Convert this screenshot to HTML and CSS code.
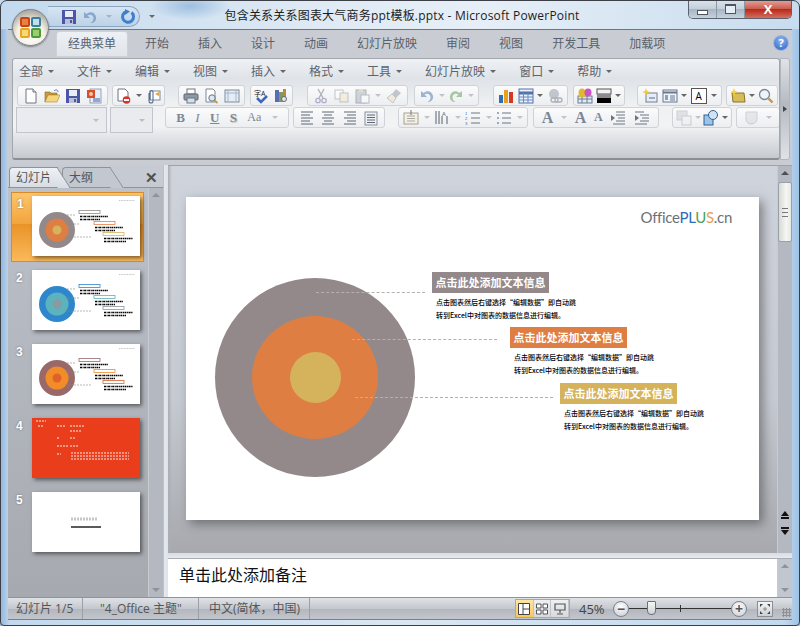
FILE: index.html
```html
<!DOCTYPE html>
<html lang="zh-CN">
<head>
    <meta charset="UTF-8">
    <title>包含关系关系图表大气商务ppt模板.pptx - Microsoft PowerPoint</title>
    <link rel="stylesheet" href="styles.css">
</head>
<body>
<svg class="defs" width="0" height="0">
    <symbol id="i-new" viewBox="0 0 16 16"><path d="M3 1h7l3 3v11H3z" fill="#fff" stroke="#6f7580"/><path d="M10 1v3h3" fill="#dfe4ea" stroke="#6f7580"/></symbol>
    <symbol id="i-open" viewBox="0 0 16 16"><path d="M1 4h5l1 1h6v2H4L1 14z" fill="#c99a3a" stroke="#8d6a1f" stroke-width=".6"/><path d="M4 7h12l-3 7H1z" fill="#f4d67c" stroke="#b0862c" stroke-width=".6"/><path d="M10 3c2-2 4-1 4 1" fill="none" stroke="#4a7ab5"/></symbol>
    <symbol id="i-save" viewBox="0 0 16 16"><rect x="1" y="1" width="14" height="14" fill="#4c56a8"/><rect x="4" y="2" width="8" height="6" fill="#e8ecf5"/><rect x="4" y="10" width="8" height="5" fill="#b9c0d2"/><rect x="9" y="11" width="2" height="3" fill="#4c56a8"/></symbol>
    <symbol id="i-ppt" viewBox="0 0 16 16"><rect x="4" y="1" width="11" height="14" fill="#e8eef7" stroke="#6c7fa0" stroke-width=".7"/><rect x="1" y="2" width="8" height="8" fill="#d94f2b"/><circle cx="5" cy="6" r="2" fill="#f7c8a8"/><path d="M7 11h7M7 13h7" stroke="#3c5fa5"/></symbol>
    <symbol id="i-deldoc" viewBox="0 0 16 16"><path d="M2 1h7l3 3v9H2z" fill="#fff" stroke="#6f7580"/><circle cx="10.500" cy="12" r="3.800" fill="#d5352b"/><rect x="8" y="11" width="5" height="2" fill="#fff"/></symbol>
    <symbol id="i-mail" viewBox="0 0 16 16"><rect x="5" y="3" width="10" height="9" fill="#fff" stroke="#7d8794"/><path d="M10 6l4-2v4z" fill="#d9a441"/><path d="M4 5v8a2 2 0 0 0 4 0V4a1.400 1.400 0 0 0-3 0v8" fill="none" stroke="#58708f" stroke-width="1.100"/></symbol>
    <symbol id="i-print" viewBox="0 0 16 16"><rect x="4" y="1" width="8" height="5" fill="#fff" stroke="#6f7580"/><rect x="1" y="6" width="14" height="6" rx="1" fill="#8f98a6" stroke="#5d6673"/><rect x="4" y="10" width="8" height="5" fill="#cfe3ea" stroke="#6f7580"/></symbol>
    <symbol id="i-preview" viewBox="0 0 16 16"><path d="M2 1h7l2 2v11H2z" fill="#fff" stroke="#7d8794"/><circle cx="8" cy="10" r="3.200" fill="#d9e8f4" stroke="#69727f"/><path d="M10.500 12.500l3 2.500" stroke="#c99a3a" stroke-width="2"/></symbol>
    <symbol id="i-frame" viewBox="0 0 16 16"><rect x="1" y="2" width="14" height="12" fill="#e4ecf6" stroke="#7c8ba0"/><path d="M4 2v12M12 2v12M1 5h14" stroke="#a8b6c8"/></symbol>
    <symbol id="i-research" viewBox="0 0 16 16"><rect x="2" y="2" width="4" height="12" fill="#5a6bb5"/><rect x="6" y="4" width="4" height="10" fill="#7f9a5a"/><rect x="10" y="1" width="3" height="12" fill="#b88a3c"/><circle cx="11" cy="11" r="2.500" fill="#dde9f3" stroke="#666"/></symbol>
    <symbol id="i-cut" viewBox="0 0 16 16"><path d="M5 1l5 9M11 1L6 10" stroke="#6d7480" stroke-width="1.400"/><circle cx="5" cy="12.500" r="2.200" fill="none" stroke="#7b6aa8" stroke-width="1.300"/><circle cx="11" cy="12.500" r="2.200" fill="none" stroke="#7b6aa8" stroke-width="1.300"/></symbol>
    <symbol id="i-copy" viewBox="0 0 16 16"><rect x="1" y="2" width="8" height="9" fill="#fff" stroke="#8c94a0"/><rect x="6" y="5" width="8" height="9" fill="#f4e7c4" stroke="#8c94a0"/></symbol>
    <symbol id="i-paste" viewBox="0 0 16 16"><rect x="2" y="2" width="10" height="13" fill="#a9b2bd" stroke="#69727f"/><rect x="5" y="1" width="4" height="3" fill="#d8c48a"/><rect x="7" y="7" width="8" height="8" fill="#fff" stroke="#7d8794"/></symbol>
    <symbol id="i-brush" viewBox="0 0 16 16"><path d="M10 1l5 4-5 5-4-4z" fill="#8f98a6"/><path d="M6 6l4 4-3 5-6-5z" fill="#ece3c8" stroke="#9a9a90"/></symbol>
    <symbol id="i-undo" viewBox="0 0 16 16"><path d="M2 3v6h6L5.500 6.500C8 5 11 6 11.500 9c.2 2-1 4-3 5 4 0 6-3 5.500-6C13 3 8 2 4.500 5z" fill="#4a73b0"/></symbol>
    <symbol id="i-redo" viewBox="0 0 16 16"><path d="M14 3v6H8l2.500-2.500C8 5 5 6 4.500 9c-.2 2 1 4 3 5-4 0-6-3-5.500-6C3 3 8 2 11.500 5z" fill="#5d9a4e"/></symbol>
    <symbol id="i-repeat" viewBox="0 0 16 16"><path d="M11.500 3.500a5.500 5.500 0 1 1-5-1" fill="none" stroke="#3f7fd0" stroke-width="3"/><path d="M5 0l5 2.500L5 6z" fill="#3f7fd0"/></symbol>
    <symbol id="i-chart" viewBox="0 0 16 16"><rect x="1" y="7" width="4" height="8" fill="#2f6db5"/><rect x="6" y="2" width="4" height="13" fill="#e8a020"/><rect x="11" y="4" width="4" height="11" fill="#d33a22"/></symbol>
    <symbol id="i-table" viewBox="0 0 16 16"><rect x="1" y="1" width="14" height="14" fill="#eaf1fa" stroke="#5272a8"/><path d="M1 5h14" stroke="#5272a8" stroke-width="3"/><path d="M1 9h14M1 12h14M5.500 5v10M10 5v10" stroke="#6d8bc0"/></symbol>
    <symbol id="i-link" viewBox="0 0 16 16"><circle cx="7" cy="6" r="5" fill="#8e96a2"/><rect x="4" y="10" width="7" height="4" rx="2" fill="none" stroke="#6f7680" stroke-width="1.400"/><rect x="8" y="10" width="7" height="4" rx="2" fill="none" stroke="#6f7680" stroke-width="1.400"/></symbol>
    <symbol id="i-shapes" viewBox="0 0 16 16"><rect x="1" y="8" width="14" height="7" fill="#e2ebf5" stroke="#6d7d93"/><path d="M1 11h14M5 8v7M10 8v7" stroke="#6d7d93"/><ellipse cx="5" cy="5" rx="3.500" ry="4.500" fill="#e3b92c"/><ellipse cx="11" cy="4.500" rx="3.500" ry="4" fill="#c856c4"/></symbol>
    <symbol id="i-bw" viewBox="0 0 16 16"><rect x="1" y="1" width="14" height="5" fill="#f2f2f2" stroke="#555"/><rect x="1" y="6" width="14" height="4" fill="#8b8b8b"/><rect x="1" y="10" width="14" height="5" fill="#000"/></symbol>
    <symbol id="i-newbox" viewBox="0 0 16 16"><rect x="4" y="5" width="11" height="9" fill="#e7edf5" stroke="#71808f"/><path d="M7 10h6" stroke="#4a6a9a"/><path d="M4 0l1 3 3 1-3 1-1 3-1-3-3-1 3-1z" fill="#f1c93c"/></symbol>
    <symbol id="i-layout" viewBox="0 0 16 16"><rect x="1" y="2" width="14" height="12" fill="#f0f4f9" stroke="#66778e"/><path d="M1 4.500h14" stroke="#66778e" stroke-width="2"/><rect x="3" y="7" width="3" height="5" fill="#8ba1c0"/><path d="M8 8h5M8 10h5M8 12h5" stroke="#66778e"/></symbol>
    <symbol id="i-starfolder" viewBox="0 0 16 16"><path d="M2 5h12l1 9H3z" fill="#d8bc58" stroke="#8a7428"/><path d="M4 0l1 3 3 1-3 1-1 3-1-3-3-1 3-1z" fill="#f3d23d"/></symbol>
    <symbol id="i-find" viewBox="0 0 16 16"><circle cx="6.500" cy="6.500" r="5" fill="#eef4fa" stroke="#7b8794" stroke-width="1.300"/><path d="M10.500 10.500l4 4" stroke="#c49a36" stroke-width="2.400"/></symbol>
    <symbol id="i-left" viewBox="0 0 16 16"><path d="M2 2h12M2 5h9M2 8h12M2 11h9M2 14h12" stroke="#5f6874"/></symbol>
    <symbol id="i-center" viewBox="0 0 16 16"><path d="M2 2h12M4 5h8M2 8h12M4 11h8M2 14h12" stroke="#5f6874"/></symbol>
    <symbol id="i-right" viewBox="0 0 16 16"><path d="M2 2h12M5 5h9M2 8h12M5 11h9M2 14h12" stroke="#5f6874"/></symbol>
    <symbol id="i-just" viewBox="0 0 16 16"><rect x="2" y="2" width="12" height="13" fill="#eef0f2" stroke="#8a929c"/><path d="M4 5h8M4 7.500h8M4 10h8M4 12.500h8" stroke="#5f6874"/></symbol>
    <symbol id="i-spacing" viewBox="0 0 16 16"><rect x="1" y="3" width="14" height="11" fill="#f4f1e4" stroke="#a6a28e"/><path d="M4 6h8M4 8.500h8M4 11h8" stroke="#a8a8a0"/><path d="M8 0v5" stroke="#6d7480"/></symbol>
    <symbol id="i-bul" viewBox="0 0 16 16"><circle cx="2" cy="3" r="1" fill="#8a92a0"/><circle cx="2" cy="8" r="1" fill="#8a92a0"/><circle cx="2" cy="13" r="1" fill="#8a92a0"/><path d="M6 3h9M6 8h9M6 13h9" stroke="#6d7480"/></symbol>
    <symbol id="i-outdent" viewBox="0 0 16 16"><path d="M6 2h9M6 5h9M8 8h7M6 11h9M3 14h12" stroke="#6d7480"/><path d="M5 8L1 5v6z" fill="#6d7480"/></symbol>
    <symbol id="i-indent" viewBox="0 0 16 16"><path d="M1 2h9M6 5h9M8 8h7M6 11h9M1 14h12" stroke="#6d7480"/><path d="M1 5l4 3-4 3z" fill="#6d7480"/></symbol>
    <symbol id="i-cards" viewBox="0 0 16 16"><rect x="1" y="1" width="10" height="9" fill="#c9ccd2" stroke="#aaa"/><rect x="6" y="6" width="9" height="9" fill="#eef0f3" stroke="#a2a6ac"/></symbol>
    <symbol id="i-3d" viewBox="0 0 16 16"><rect x="1" y="5" width="9" height="10" fill="#9cc4e8" stroke="#34608f"/><circle cx="10" cy="5" r="4.500" fill="#cfe3f5" stroke="#34608f"/></symbol>
    <symbol id="i-blob" viewBox="0 0 16 16"><path d="M2 2h11v7c0 3-3 5-6 5-3 0-5-2-5-5z" fill="#d5d8dd" stroke="#a8acb2"/></symbol>
    <symbol id="thumb-rings" viewBox="0 0 108 60">
        <circle cx="25" cy="34" r="18" class="r1"/><circle cx="25" cy="34" r="11.500" class="r2"/><circle cx="25" cy="34" r="4.500" class="r3"/>
        <path d="M35 19h9M33 28h14M33 41h26" stroke="#888" stroke-width=".6" stroke-dasharray="2 1"/>
        <rect x="47" y="14.500" width="21" height="3" fill="#fff" class="l1"/><rect x="62" y="25.500" width="21" height="3" fill="#fff" class="l2"/><rect x="71" y="36.500" width="21" height="3" fill="#fff" class="l3"/>
        <path d="M48 20.500h28M48 23.500h20M63 31.500h28M63 34.500h20M72 42.500h29M72 45.500h22" stroke="#000" stroke-width="1.500" stroke-dasharray="2 .6 1 .5"/>
        <path d="M87 4.500h16" stroke="#c4c4c4" stroke-dasharray="1 .6"/>
    </symbol>
</svg>

<div class="window">
    <header class="titlebar">
        <div class="orb">
            <span class="orb-logo"><i class="q1"></i><i class="q2"></i><i class="q3"></i><i class="q4"></i></span>
        </div>
        <div class="qat">
            <svg class="ic"><use href="#i-save"/></svg>
            <svg class="ic off"><use href="#i-undo"/></svg><b class="dd off"></b>
            <svg class="ic"><use href="#i-repeat"/></svg>
        </div>
        <b class="dd qat-more"></b>
        <div class="title">包含关系关系图表大气商务ppt模板.pptx - Microsoft PowerPoint</div>
        <div class="win-btns">
            <span class="win-btn"><i class="glyph-min"></i></span>
            <span class="win-btn"><i class="glyph-max"></i></span>
            <span class="win-btn close">X</span>
        </div>
    </header>

    <nav class="tabs">
        <span class="tab active">经典菜单</span>
        <span class="tab">开始</span>
        <span class="tab">插入</span>
        <span class="tab">设计</span>
        <span class="tab">动画</span>
        <span class="tab">幻灯片放映</span>
        <span class="tab">审阅</span>
        <span class="tab">视图</span>
        <span class="tab">开发工具</span>
        <span class="tab">加载项</span>
        <span class="help">?</span>
    </nav>

    <div class="ribbon-wrap">
        <section class="ribbon">
            <div class="menu">
                <span class="menu-item">全部<b class="dd"></b></span>
                <span class="menu-item">文件<b class="dd"></b></span>
                <span class="menu-item">编辑<b class="dd"></b></span>
                <span class="menu-item">视图<b class="dd"></b></span>
                <span class="menu-item">插入<b class="dd"></b></span>
                <span class="menu-item">格式<b class="dd"></b></span>
                <span class="menu-item">工具<b class="dd"></b></span>
                <span class="menu-item">幻灯片放映<b class="dd"></b></span>
                <span class="menu-item">窗口<b class="dd"></b></span>
                <span class="menu-item">帮助<b class="dd"></b></span>
            </div>
            <div class="toolrow row-one">
                <div class="grp w91"><svg class="ic"><use href="#i-new"/></svg><svg class="ic"><use href="#i-open"/></svg><svg class="ic"><use href="#i-save"/></svg><svg class="ic"><use href="#i-ppt"/></svg></div>
                <div class="grp w53 m4"><svg class="ic"><use href="#i-deldoc"/></svg><b class="dd"></b><svg class="ic"><use href="#i-mail"/></svg></div>
                <div class="grp w67 m13"><svg class="ic"><use href="#i-print"/></svg><svg class="ic"><use href="#i-preview"/></svg><svg class="ic"><use href="#i-frame"/></svg></div>
                <div class="grp w43 m5">
                    <svg class="ic" viewBox="0 0 16 16"><text x="0" y="8" class="i-txt">字A</text><path d="M3 10l4 4 6-6" fill="none" stroke="#3d68b5" stroke-width="2.500"/></svg>
                    <svg class="ic"><use href="#i-research"/></svg>
                </div>
                <div class="grp w101 m14"><svg class="ic off"><use href="#i-cut"/></svg><svg class="ic off"><use href="#i-copy"/></svg><svg class="ic off"><use href="#i-paste"/></svg><b class="dd off"></b><svg class="ic off"><use href="#i-brush"/></svg></div>
                <div class="grp w65 m6"><svg class="ic off"><use href="#i-undo"/></svg><b class="dd off"></b><svg class="ic off"><use href="#i-redo"/></svg><b class="dd off"></b></div>
                <div class="grp w75 m14"><svg class="ic"><use href="#i-chart"/></svg><svg class="ic"><use href="#i-table"/></svg><b class="dd"></b><svg class="ic off"><use href="#i-link"/></svg></div>
                <div class="grp w52 m5"><svg class="ic"><use href="#i-shapes"/></svg><svg class="ic"><use href="#i-bw"/></svg><b class="dd"></b></div>
                <div class="grp w85 m12">
                    <svg class="ic"><use href="#i-newbox"/></svg><svg class="ic"><use href="#i-layout"/></svg><b class="dd"></b>
                    <svg class="ic" viewBox="0 0 16 16"><rect x=".5" y=".5" width="15" height="15" fill="#fff" stroke="#555"/><text x="4.500" y="12" class="i-mono">A</text></svg><b class="dd"></b>
                </div>
                <div class="grp w52 m4"><svg class="ic"><use href="#i-starfolder"/></svg><b class="dd"></b><svg class="ic"><use href="#i-find"/></svg></div>
            </div>
            <div class="toolrow row-two">
                <div class="combo w91"><b class="dd off"></b></div>
                <div class="combo w43 m3"><b class="dd off"></b></div>
                <div class="grp w124 m12 fmt"><span class="f-b">B</span><span class="f-i">I</span><span class="f-u">U</span><span class="f-s">S</span><span class="f-a">Aa</span><b class="dd off"></b></div>
                <div class="grp w92 m4"><svg class="ic"><use href="#i-left"/></svg><svg class="ic"><use href="#i-center"/></svg><svg class="ic"><use href="#i-right"/></svg><svg class="ic"><use href="#i-just"/></svg></div>
                <div class="grp w130 m13">
                    <svg class="ic"><use href="#i-spacing"/></svg><b class="dd off"></b>
                    <svg class="ic" viewBox="0 0 16 16"><path d="M2 1v13M5 1v13M8 6v8M13 6v8" stroke="#59616c"/><text x="8" y="6" class="i-mini">A</text></svg><b class="dd off"></b>
                    <svg class="ic" viewBox="0 0 16 16"><text x="0" y="5" class="i-digit">1</text><text x="0" y="10" class="i-digit">2</text><text x="0" y="15" class="i-digit">3</text><path d="M6 3h9M6 8h9M6 13h9" stroke="#6d7480"/></svg><b class="dd off"></b>
                    <svg class="ic"><use href="#i-bul"/></svg><b class="dd off"></b>
                </div>
                <div class="grp w126 m5 fmt"><span class="a-big">A</span><b class="dd off"></b><span class="a-big">A</span><span class="a-small">A</span><svg class="ic"><use href="#i-outdent"/></svg><svg class="ic"><use href="#i-indent"/></svg></div>
                <div class="grp w60 m13"><svg class="ic off"><use href="#i-cards"/></svg><b class="dd off"></b><svg class="ic"><use href="#i-3d"/></svg><b class="dd"></b></div>
                <div class="grp w44 m4"><svg class="ic off"><use href="#i-blob"/></svg><b class="dd off"></b></div>
            </div>
        </section>
        <div class="ribbon-more"><b class="more-arrow"></b></div>
    </div>

    <main class="workspace">
        <aside class="panel">
            <div class="panel-tabs">
                <span class="ptab ptab-on">幻灯片</span>
                <span class="ptab ptab-off">大纲</span>
                <span class="panel-close">✕</span>
            </div>
            <div class="thumbs-wrap">
                <ol class="thumbs">
                    <li class="thumb-row selected"><span class="num">1</span><svg class="thumb t-grey"><use href="#thumb-rings"/></svg></li>
                    <li class="thumb-row"><span class="num">2</span><svg class="thumb t-blue"><use href="#thumb-rings"/></svg></li>
                    <li class="thumb-row"><span class="num">3</span><svg class="thumb t-brown"><use href="#thumb-rings"/></svg></li>
                    <li class="thumb-row"><span class="num">4</span>
                        <svg class="thumb t-red" viewBox="0 0 108 60">
                            <rect width="108" height="60" fill="#ea3d1b"/>
                            <path d="M4 3h10M6 8h6M25 8h8M38 8h14M38 13h12M25 20h3M38 20h6M25 28h12M38 28h8M25 36h4M39 35h58M39 38h58M39 41h58" stroke="#fff" stroke-width=".9" stroke-dasharray="2 1"/>
                        </svg>
                    </li>
                    <li class="thumb-row"><span class="num">5</span>
                        <svg class="thumb" viewBox="0 0 108 60">
                            <rect width="108" height="60" fill="#fff"/>
                            <path d="M39 27h26" stroke="#c6c6c6" stroke-width="3" stroke-dasharray="2 1"/>
                            <path d="M39 35h30" stroke="#000" stroke-width="1.300"/>
                        </svg>
                    </li>
                </ol>
                <div class="vscroll thin"><b class="up"></b><b class="down"></b></div>
            </div>
        </aside>
        <div class="splitter"></div>
        <div class="center">
            <div class="stage">
                <div class="slide-area">
                    <article class="slide">
                        <div class="logo">Office<span class="c-b">PL</span><span class="c-g">U</span><span class="c-o">S</span>.cn</div>
                        <div class="ring r-outer"></div>
                        <div class="ring r-mid"></div>
                        <div class="ring r-inner"></div>
                        <div class="lead l-1"></div>
                        <div class="lead l-2"></div>
                        <div class="lead l-3"></div>
                        <div class="note n-1"><h3 class="note-head">点击此处添加文本信息</h3><p>点击图表然后右键选择“编辑数据”即自动跳</p><p>转到Excel中对图表的数据信息进行编辑。</p></div>
                        <div class="note n-2"><h3 class="note-head">点击此处添加文本信息</h3><p>点击图表然后右键选择“编辑数据”即自动跳</p><p>转到Excel中对图表的数据信息进行编辑。</p></div>
                        <div class="note n-3"><h3 class="note-head">点击此处添加文本信息</h3><p>点击图表然后右键选择“编辑数据”即自动跳</p><p>转到Excel中对图表的数据信息进行编辑。</p></div>
                    </article>
                </div>
                <div class="vscroll main-scroll">
                    <b class="up"></b>
                    <span class="scroll-thumb"></span>
                    <span class="pager"><i class="tri-up"></i><i class="bar"></i></span>
                    <span class="pager"><i class="bar"></i><i class="tri-down"></i></span>
                </div>
            </div>
            <div class="notes-split"></div>
            <div class="notes-row">
                <div class="notes">单击此处添加备注</div>
                <div class="vscroll notes-scroll"><b class="up"></b><b class="down"></b></div>
            </div>
        </div>
    </main>

    <footer class="status">
        <span class="st st-1">幻灯片 1/5</span>
        <span class="st st-2">"4_Office 主题"</span>
        <span class="st st-3">中文(简体，中国)</span>
        <div class="views">
            <span class="view on"><svg class="ic-s" viewBox="0 0 12 12"><path d="M.5.5h11v11H.5zM5 .5v11M5 6h6.500" fill="#fff" stroke="#444"/></svg></span>
            <span class="view"><svg class="ic-s" viewBox="0 0 12 12"><path d="M.5 1h4.500v4H.5zM7 1h4.500v4H7zM.5 7h4.500v4H.5zM7 7h4.500v4H7z" fill="#fff" stroke="#555"/></svg></span>
            <span class="view"><svg class="ic-s" viewBox="0 0 12 12"><path d="M1 1h10v6H1zM6 7v3M3 11h6" fill="none" stroke="#555" stroke-width="1.200"/></svg></span>
        </div>
        <span class="zoom-pct">45%</span>
        <span class="zbtn">−</span>
        <div class="zslider"><i class="ztick"></i><i class="zthumb"></i></div>
        <span class="zbtn">+</span>
        <span class="zfit"><svg class="ic-s" viewBox="0 0 12 12"><path d="M1 1l3 0-3 3zM11 1l-3 0 3 3zM1 11l3 0-3-3zM11 11l-3 0 3-3z" fill="#444"/><path d="M6 4v4M4 6h4" stroke="#888"/></svg></span>
        <span class="grip"></span>
    </footer>
</div>
</body>
</html>
```

FILE: styles.css
```css
* {
    box-sizing: border-box;
}
html, body {
    margin: 0;
    padding: 0;
}
body {
    width: 800px;
    height: 626px;
    overflow: hidden;
    font-family: "Open Sans", "Noto Sans CJK SC", sans-serif;
    font-size: 12px;
    color: #444;
}
.defs {
    position: absolute;
}
.i-txt {
    font-size: 7px;
    fill: #222;
}
.i-mono {
    font-size: 10px;
    fill: #000;
}
.i-mini {
    font-size: 6px;
    fill: #5a6270;
}
.i-digit {
    font-family: "Liberation Sans", sans-serif;
    font-size: 4.200px;
    fill: #3f6fb0;
}

/* window frame */
.window {
    position: relative;
    width: 800px;
    height: 626px;
    padding: 0 8px 6px;
    display: flex;
    flex-direction: column;
    background: linear-gradient(90deg, #8fb6dd 0, #c3d9ee 10px, #d9e7f3 50%, #c3d9ee 98%, #9cc2e6 100%);
    overflow: hidden;
}
.window::after {
    content: "";
    position: absolute;
    inset: 0;
    border: 1px solid #3c4046;
    border-radius: 7px 7px 4px 4px;
    pointer-events: none;
    z-index: 5;
}
.titlebar {
    height: 29px;
    flex: none;
    margin: 0 -8px;
    position: relative;
    display: flex;
    align-items: flex-start;
    background:
        radial-gradient(ellipse 40px 14px at 190px 6px, #9dbfe0, transparent),
        linear-gradient(90deg, #c3d9ee 0, #dfeaf4 40%, #e6eff7 60%, #c8dcef 100%);
}
.orb {
    position: absolute;
    left: 12px;
    top: 9px;
    width: 37px;
    height: 37px;
    border-radius: 50%;
    z-index: 3;
    display: flex;
    align-items: center;
    justify-content: center;
    border: 1px solid #7d8088;
    background: radial-gradient(circle at 50% 70%, #fff 0, #f4f0e4 45%, #b9b6ae 72%, #8f8f8e 100%);
    box-shadow: 0 1px 2px rgba(0, 0, 0, .4);
}
.orb-logo {
    display: grid;
    grid-template-columns: 10px 10px;
    grid-template-rows: 10px 10px;
    gap: 1px;
}
.orb-logo i {
    border: 2px solid;
    border-radius: 2px;
}
.q1 { border-color: #c8431c !important; background: #e9833a; }
.q2 { border-color: #3a7f9e !important; background: #bfe0e8; }
.q3 { border-color: #e5a620 !important; background: #f7d878; }
.q4 { border-color: #4e9a3a !important; background: #9ccc70; }

.qat {
    position: absolute;
    left: 48px;
    top: 6px;
    width: 92px;
    height: 21px;
    padding-left: 13px;
    display: flex;
    align-items: center;
    gap: 5px;
    border: 1px solid #8da6bf;
    border-left: 0;
    border-radius: 0 11px 11px 0;
    background: linear-gradient(#d7e5f2, #bcd2e6);
}
.qat .dd {
    margin: 0 3px;
}
.qat-more {
    position: absolute;
    left: 149px;
    top: 15px;
}
.title {
    flex: 1;
    padding-top: 6px;
    padding-left: 4px;
    text-align: center;
    letter-spacing: .2px;
    color: #1c1c1c;
    white-space: nowrap;
}
.win-btns {
    position: absolute;
    right: 8px;
    top: 0;
    display: flex;
    height: 19px;
    border: 1px solid #59626e;
    border-top: 0;
    border-radius: 0 0 5px 5px;
    overflow: hidden;
}
.win-btn {
    width: 28px;
    display: flex;
    align-items: center;
    justify-content: center;
    border-right: 1px solid #8a97a6;
    background: linear-gradient(#dbe4ec, #c3ced9 50%, #a7b5c4 52%, #c5d3e0);
}
.win-btn.close {
    width: 46px;
    border: 0;
    color: #fff;
    font-weight: 700;
    font-size: 13px;
    background: linear-gradient(#e4a59c, #cc5a4b 50%, #b8281a 52%, #d46f5d);
}
.glyph-min {
    width: 11px;
    height: 5px;
    margin-top: 6px;
    border: 1px solid #4c5560;
    background: #fff;
}
.glyph-max {
    width: 11px;
    height: 10px;
    border: 1px solid #4c5560;
    border-top-width: 2px;
    background: #e6edf3;
}

/* ribbon tabs */
.tabs {
    height: 28px;
    flex: none;
    display: flex;
    align-items: flex-end;
    gap: 29px;
    padding: 0 0 1px 60px;
    position: relative;
    border-top: 1px solid #70757c;
    color: #59616c;
    background: #c9cdd3;
}
.tab {
    height: 24px;
    line-height: 24px;
    white-space: nowrap;
}
.tab.active {
    margin: 0 -11px;
    padding: 0 11px;
    border-radius: 3px 3px 0 0;
    background: linear-gradient(#eef1f4, #e0e5ea);
    box-shadow: 0 0 1px #fff;
}
.help {
    position: absolute;
    right: 4px;
    top: 6px;
    width: 14px;
    height: 14px;
    border-radius: 50%;
    text-align: center;
    line-height: 14px;
    font-size: 11px;
    font-weight: 700;
    color: #fff;
    background: radial-gradient(circle at 50% 30%, #8fb6f0, #2a5fc4);
    box-shadow: 0 0 0 1px #9db6d8;
}

/* ribbon */
.ribbon-wrap {
    height: 108px;
    flex: none;
    display: flex;
    padding: 1px 2px 5px 4px;
    background: #c9cdd3;
}
.ribbon {
    width: 768px;
    overflow: hidden;
    border: 1px solid #a2a7ae;
    border-bottom: 2px solid #8a8f96;
    border-radius: 3px;
    padding-left: 4px;
    background: linear-gradient(#eff1f4 0, #dfe3e8 20%, #eef0f2 45%, #f2f3f5 68%, #e6e8eb 76%, #c6cad0 100%);
}
.ribbon-more {
    flex: 1;
    display: flex;
    align-items: center;
    justify-content: center;
    border: 1px solid #b0b5bc;
    border-radius: 0 3px 3px 0;
    background: linear-gradient(#dfe3e7, #b5bac2 45%, #dfe3e7);
}
.more-arrow {
    border-left: 4px solid #444;
    border-top: 3px solid transparent;
    border-bottom: 3px solid transparent;
}
.menu {
    height: 26px;
    display: flex;
    align-items: center;
    padding: 0 0 2px 2px;
    color: #5c646e;
}
.menu-item {
    display: flex;
    align-items: center;
    gap: 5px;
    margin-right: 23px;
    white-space: nowrap;
}
.dd {
    display: inline-block;
    flex: none;
    width: 0;
    height: 0;
    border-top: 3px solid #666;
    border-left: 3px solid transparent;
    border-right: 3px solid transparent;
}
.dd.off {
    opacity: .35;
}
.toolrow {
    display: flex;
    align-items: flex-start;
    white-space: nowrap;
}
.row-one {
    height: 22px;
}
.row-two {
    margin-left: -1px;
    height: 26px;
}
.grp {
    height: 21px;
    flex: none;
    display: flex;
    align-items: center;
    justify-content: space-evenly;
    border: 1px solid #cfd3d8;
    border-radius: 3px;
    background: linear-gradient(#fbfbfc, #eceef1);
}
.combo {
    height: 26px;
    flex: none;
    display: flex;
    align-items: center;
    justify-content: flex-end;
    padding-right: 7px;
    border: 1px solid #c2c6cc;
    background: #e9ebee;
}
.ic {
    width: 16px;
    height: 16px;
    flex: none;
}
.ic.off {
    opacity: .5;
}
.w43 { width: 43px; }
.w44 { width: 44px; }
.w52 { width: 52px; }
.w53 { width: 53px; }
.w60 { width: 60px; }
.w65 { width: 65px; }
.w67 { width: 67px; }
.w75 { width: 75px; }
.w85 { width: 85px; }
.w91 { width: 91px; }
.w92 { width: 92px; }
.w101 { width: 101px; }
.w124 { width: 124px; }
.w126 { width: 126px; }
.w130 { width: 130px; }
.m3 { margin-left: 3px; }
.m4 { margin-left: 4px; }
.m5 { margin-left: 5px; }
.m6 { margin-left: 6px; }
.m12 { margin-left: 12px; }
.m13 { margin-left: 13px; }
.m14 { margin-left: 14px; }
.fmt {
    font-family: "Liberation Serif", serif;
    color: #7d8694;
}
.f-b { font-weight: 700; font-size: 13px; }
.f-i { font-style: italic; font-size: 13px; }
.f-u { text-decoration: underline; font-weight: 700; font-size: 13px; }
.f-s { font-weight: 700; font-size: 13px; text-shadow: 1px 1px 1px #bbb; }
.f-a { font-size: 12px; }
.a-big { font-size: 16px; font-weight: 700; }
.a-small { font-size: 12px; font-weight: 700; }

/* workspace */
.workspace {
    flex: 1;
    min-height: 0;
    display: flex;
    background: #c9cdd3;
}
.panel {
    width: 155px;
    flex: none;
    display: flex;
    flex-direction: column;
    background: #c6cad2;
}
.panel-tabs {
    height: 22px;
    flex: none;
    margin-top: 1px;
    display: flex;
    align-items: flex-end;
    position: relative;
    color: #555;
    border-bottom: 1px solid #8e939b;
}
.ptab {
    height: 20px;
    line-height: 19px;
    padding: 0 6px;
    position: relative;
    border: 1px solid #8e939b;
    border-right: 0;
    border-bottom: 0;
    border-radius: 4px 0 0 0;
    background: #c3c8d0;
    margin-right: 4px;
}
.ptab::after {
    content: "";
    position: absolute;
    top: -1px;
    right: -6px;
    width: 12px;
    height: 20px;
    border-right: 1px solid #8e939b;
    border-top: 1px solid #8e939b;
    background: inherit;
    transform: skewX(33deg);
}
.ptab-off {
    padding-right: 18px;
}
.ptab-on {
    z-index: 2;
    margin-left: 1px;
    background: linear-gradient(#eef1f5, #d8dde4);
}
.panel-close {
    position: absolute;
    right: 5px;
    top: 1px;
    font-size: 15px;
    font-weight: 700;
    color: #4d5157;
}
.thumbs-wrap {
    flex: 1;
    min-height: 0;
    display: flex;
    background: linear-gradient(#bcc1ca, #a6a9af);
}
.thumbs {
    flex: 1;
    margin: 0;
    padding: 4px 4px 0 3px;
    list-style: none;
}
.thumb-row {
    height: 70px;
    margin-bottom: 4px;
    padding: 3px 0 0 21px;
    position: relative;
}
.thumb-row.selected {
    padding: 3px 0 0 20px;
    margin-bottom: 5px;
    border: 1px solid #d98a2b;
    background: linear-gradient(#fcc56b, #f3a53d 45%, #e99328 46%, #fbb95a);
}
.num {
    position: absolute;
    left: 5px;
    top: 4px;
    color: #fff;
    font-weight: 700;
    font-family: "Liberation Sans", sans-serif;
    text-shadow: 0 0 2px #666;
}
.thumb {
    display: block;
    width: 108px;
    height: 60px;
    background: #fff;
    box-shadow: 2px 2px 4px rgba(0, 0, 0, .5);
}
.t-grey { --a: #93898a; --b: #de7e42; --c: #d4b35c; }
.t-blue { --a: #2e86cc; --b: #5cb2bd; --c: #8a9aa0; }
.t-brown { --a: #99696a; --b: #f28c28; --c: #e0622a; }
.r1 { fill: var(--a); }
.r2 { fill: var(--b); }
.r3 { fill: var(--c); }
.l1 { stroke: var(--a); stroke-width: .8; }
.l2 { stroke: var(--b); stroke-width: .8; }
.l3 { stroke: var(--c); stroke-width: .8; }
.vscroll {
    width: 15px;
    flex: none;
    position: relative;
    display: flex;
    flex-direction: column;
    align-items: center;
    border-left: 1px solid #c7cbd2;
    background: #b4b8c0;
}
.up, .down {
    position: absolute;
    width: 0;
    height: 0;
    border-left: 4px solid transparent;
    border-right: 4px solid transparent;
}
.up {
    top: 5px;
    border-bottom: 4px solid #8e939b;
}
.down {
    bottom: 5px;
    border-top: 4px solid #8e939b;
}
.splitter {
    width: 5px;
    flex: none;
    background: linear-gradient(90deg, #a8acb4 0, #e4e7ec 30%, #dfe3e8 100%);
}
.center {
    flex: 1;
    min-width: 0;
    display: flex;
    flex-direction: column;
}
.stage {
    height: 388px;
    flex: none;
    display: flex;
    border-top: 1px solid #9ea3aa;
}
.slide-area {
    flex: 1;
    padding: 31px 0 0 18px;
    background:
        linear-gradient(90deg, #a9adb6, transparent 4px),
        linear-gradient(#cfd3dc, #c6cad2 60%, #a7a9ae);
}

/* slide */
.slide {
    width: 573px;
    height: 323px;
    position: relative;
    background: #fff;
    box-shadow: 4px 4px 10px rgba(60, 60, 60, .55);
    overflow: hidden;
}
.logo {
    position: absolute;
    right: 27px;
    top: 11px;
    font-family: "Lato", sans-serif;
    font-size: 15px;
    letter-spacing: -.3px;
    color: #6c7178;
}
.c-b { color: #2d69b5; }
.c-g { color: #4e9f5a; }
.c-o { color: #e5a25c; }
.ring {
    position: absolute;
    border-radius: 50%;
}
.r-outer { left: 29px; top: 81px; width: 200px; height: 199px; background: #93898a; }
.r-mid { left: 66px; top: 119px; width: 126px; height: 123px; background: #de7e42; }
.r-inner { left: 104px; top: 155px; width: 51px; height: 51px; background: #d4b35c; }
.lead {
    position: absolute;
    height: 1px;
    border-top: 1px dashed #b4b0ae;
}
.l-1 { left: 130px; top: 95px; width: 109px; }
.l-2 { left: 166px; top: 142px; width: 145px; }
.l-3 { left: 169px; top: 200px; width: 198px; }
.note {
    position: absolute;
    width: 160px;
    font-family: "Noto Sans CJK SC", sans-serif;
    color: #000;
}
.note p {
    margin: 0 0 0 4px;
    height: 12.500px;
    font-size: 7px;
    font-weight: 500;
    line-height: 12.500px;
    white-space: nowrap;
}
.note-head {
    width: 117px;
    height: 21px;
    margin: 0 0 3px;
    font-size: 11px;
    line-height: 21px;
    font-weight: 700;
    text-align: center;
    color: #fff;
}
.n-1 { left: 246px; top: 75px; }
.n-2 { left: 324px; top: 130px; }
.n-3 { left: 374px; top: 186px; }
.n-1 .note-head { background: #93898a; }
.n-2 .note-head { background: #de7e42; }
.n-3 .note-head { background: #d4b35c; }

/* right scrollbar */
.main-scroll {
    padding-top: 16px;
}
.main-scroll .up {
    border-bottom-color: #4c4f55;
}
.scroll-thumb {
    width: 14px;
    height: 60px;
    flex: none;
    position: relative;
    border: 1px solid #9aa0a8;
    border-radius: 2px;
    background: linear-gradient(90deg, #d6d9d6, #f6f6f2 60%, #e6e8e6);
}
.scroll-thumb::after {
    content: "";
    position: absolute;
    left: 3px;
    top: 25px;
    width: 6px;
    height: 7px;
    border-top: 1px solid #777;
    border-bottom: 1px solid #777;
    background: linear-gradient(#777, #777) center / 100% 1px no-repeat;
}
.pager {
    display: flex;
    flex-direction: column;
    align-items: center;
    gap: 1px;
    margin-bottom: 8px;
}
.scroll-thumb + .pager {
    margin-top: auto;
}
.pager + .pager {
    margin-bottom: 18px;
}
.tri-up, .tri-down {
    width: 0;
    height: 0;
    border-left: 4px solid transparent;
    border-right: 4px solid transparent;
}
.tri-up { border-bottom: 5px solid #111; }
.tri-down { border-top: 5px solid #111; }
.bar {
    width: 8px;
    height: 2px;
    background: #111;
}
.notes-split {
    height: 6px;
    flex: none;
    background: linear-gradient(#d9dce2, #e7e9ed);
    border-bottom: 1px solid #a8acb3;
}
.notes-row {
    flex: 1;
    min-height: 0;
    display: flex;
}
.notes {
    flex: 1;
    padding: 3px 0 0 11px;
    font-size: 16px;
    color: #111;
    background: #fff;
}
.notes-scroll {
    background: #c2c6ce;
}

/* status bar */
.status {
    height: 23px;
    flex: none;
    display: flex;
    align-items: center;
    position: relative;
    border-top: 1px solid #8f949b;
    border-bottom: 1px solid #6d8098;
    background: linear-gradient(#dfe2e6, #c4c8ce 50%, #b2b6bd 52%, #c3c7cd);
    color: #555;
}
.st {
    height: 100%;
    line-height: 21px;
    white-space: nowrap;
    border-right: 1px solid #9ba0a8;
}
.st-1 { width: 75px; padding-left: 8px; }
.st-2 { width: 116px; padding-left: 17px; }
.st-3 { width: 111px; padding-left: 10px; }
.views {
    margin-left: 205px;
    width: 55px;
    height: 19px;
    display: flex;
    flex: none;
    border: 1px solid #a5a9af;
    background: linear-gradient(#eef0f2, #d6d9dd);
}
.view {
    flex: 1;
    display: flex;
    align-items: center;
    justify-content: center;
    border-right: 1px solid #c0c3c8;
}
.view.on {
    background: linear-gradient(#fbe6a6, #f7c75e);
}
.ic-s {
    width: 12px;
    height: 12px;
}
.zoom-pct {
    margin-left: 9px;
    width: 28px;
    font-size: 13px;
    color: #444;
}
.zbtn {
    width: 16px;
    height: 16px;
    flex: none;
    border: 1px solid #7c8088;
    border-radius: 50%;
    text-align: center;
    line-height: 13px;
    font-size: 14px;
    font-weight: 700;
    color: #555;
    background: radial-gradient(circle at 50% 35%, #fff, #c5c9cf);
}
.zoom-pct + .zbtn {
    margin-left: 6px;
}
.zslider {
    width: 102px;
    height: 1px;
    flex: none;
    position: relative;
    background: #333;
}
.ztick {
    position: absolute;
    left: 51px;
    top: -3px;
    width: 1px;
    height: 7px;
    background: #333;
}
.zthumb {
    position: absolute;
    left: 18px;
    top: -7px;
    width: 9px;
    height: 14px;
    border: 1px solid #6d7177;
    border-radius: 1px 1px 4px 4px;
    background: linear-gradient(#f6f6f6, #cfd2d6);
}
.zfit {
    margin-left: 10px;
    width: 16px;
    height: 16px;
    flex: none;
    display: flex;
    align-items: center;
    justify-content: center;
    border: 1px solid #8b8f95;
    background: linear-gradient(#f4f5f6, #ccd0d4);
}
.grip {
    position: absolute;
    right: 1px;
    bottom: 2px;
    width: 9px;
    height: 9px;
    background: radial-gradient(circle, #8d9096 1px, transparent 1.300px) 0 0 / 3px 3px;
}
```
